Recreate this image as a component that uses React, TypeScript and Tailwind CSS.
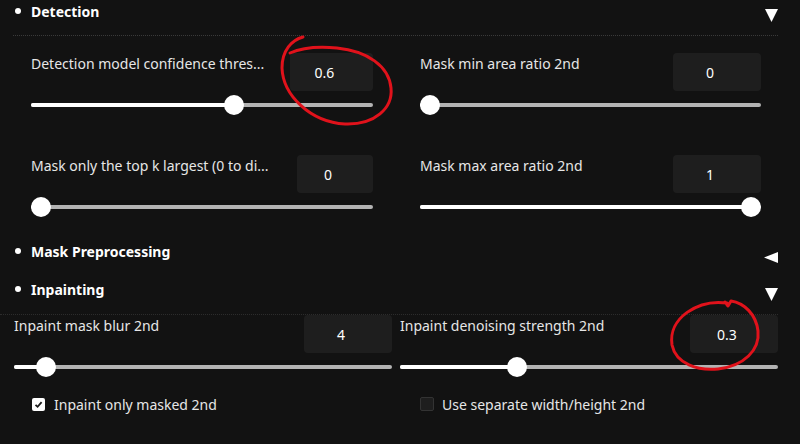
import React from 'react';

interface SliderProps {
  pct: number;
}

function Slider({ pct }: SliderProps) {
  return (
    <div className="relative h-5">
      <div className="absolute left-0 right-0 top-1/2 -translate-y-1/2 h-[4px] rounded-full bg-[#b3b3b3]" />
      <div
        className="absolute left-0 top-1/2 -translate-y-1/2 h-[4px] rounded-full bg-white"
        style={{ width: `calc(10px + ${pct} * (100% - 20px))` }}
      />
      <div
        className="absolute top-0 h-5 w-5 rounded-full bg-white"
        style={{ left: `calc(${pct} * (100% - 20px))` }}
      />
    </div>
  );
}

interface FieldProps {
  label: string;
  value: string;
  pct: number;
  boxClass: string;
}

function Field({ label, value, pct, boxClass }: FieldProps) {
  return (
    <div className="flex flex-col">
      <div className="flex items-start gap-2">
        <div className="flex-1 min-w-0 whitespace-nowrap overflow-hidden pt-[1px] text-[14px] leading-[20px] text-[#e6e6e6]">
          {label}
        </div>
        <div
          className={`${boxClass} h-[38px] shrink-0 rounded-[4px] bg-[#1e1e1e] flex items-center justify-center pr-[14px] text-[14px] text-white`}
        >
          {value}
        </div>
      </div>
      <div className="mt-1">
        <Slider pct={pct} />
      </div>
    </div>
  );
}

function TriDown({ className }: { className: string }) {
  return (
    <svg width="13" height="13" viewBox="0 0 13 13" className={className}>
      <polygon points="0,0 13,0 6.5,13" fill="white" />
    </svg>
  );
}

function TriLeft({ className }: { className: string }) {
  return (
    <svg width="14" height="11" viewBox="0 0 14 11" className={className}>
      <polygon points="14,0 14,11 0,5.5" fill="white" />
    </svg>
  );
}

function Header({ title, children }: { title: string; children: React.ReactNode }) {
  return (
    <div className="flex h-6 items-center justify-between pl-[15px] pr-[22px]">
      <div className="flex items-center gap-[10px] -translate-y-[1px]">
        <div className="h-[6px] w-[6px] rounded-full bg-white" />
        <span className="text-[14px] font-bold text-white">{title}</span>
      </div>
      {children}
    </div>
  );
}

export default function App() {
  return (
    <div className="relative h-[444px] w-[800px] overflow-hidden bg-[#121212] font-['Noto_Sans',sans-serif] text-white">
      <Header title="Detection">
        <TriDown className="mt-[7px]" />
      </Header>
      <div className="ml-[13px] mt-[11px] w-[765px] border-t border-dotted border-[#3a3a3a]" />

      <div className="grid grid-cols-[342px_341px] gap-x-[47px] gap-y-[40px] pl-[31px] pt-[17px]">
        <Field label="Detection model confidence thres..." value="0.6" pct={0.6} boxClass="w-[83px]" />
        <Field label="Mask min area ratio 2nd" value="0" pct={0} boxClass="w-[88px]" />
        <Field label="Mask only the top k largest (0 to di..." value="0" pct={0} boxClass="w-[76px]" />
        <Field label="Mask max area ratio 2nd" value="1" pct={1} boxClass="w-[88px]" />
      </div>

      <div className="mt-[23px]">
        <Header title="Mask Preprocessing">
          <TriLeft className="mt-[11px]" />
        </Header>
      </div>
      <div className="mt-[14px]">
        <Header title="Inpainting">
          <TriDown className="mt-[8px]" />
        </Header>
      </div>
      <div className="mt-[12px] w-[778px] border-t border-dotted border-[#2c2c2c]" />

      <div className="grid grid-cols-[378px_378px] gap-x-[8px] px-[14px]">
        <Field label="Inpaint mask blur 2nd" value="4" pct={4 / 64} boxClass="w-[88px]" />
        <Field label="Inpaint denoising strength 2nd" value="0.3" pct={0.3} boxClass="w-[88px]" />
        <div className="mt-[17px] flex h-5 items-center gap-[9px] pl-[18px]">
          <div className="flex h-[13px] w-[13px] items-center justify-center rounded-[2px] bg-white">
            <svg width="9" height="9" viewBox="0 0 9 9">
              <polyline points="1.5,4.8 3.6,6.8 7.6,2.2" fill="none" stroke="#1a1a1a" strokeWidth="1.8" />
            </svg>
          </div>
          <span className="text-[14px] text-[#e6e6e6]">Inpaint only masked 2nd</span>
        </div>
        <div className="mt-[17px] flex h-5 items-center gap-[8px] pl-[20px]">
          <div className="h-[14px] w-[14px] rounded-[2px] border border-[#333] bg-[#1e1e1e]" />
          <span className="text-[14px] text-[#e6e6e6]">Use separate width/height 2nd</span>
        </div>
      </div>

      <svg className="pointer-events-none absolute left-0 top-0" width="800" height="444" viewBox="0 0 800 444">
        <path
          d="M 303 37 C 292 40, 282 50, 282 68 C 283 95, 310 122, 345 124 C 375 125, 393 108, 391 88 C 389 66, 367 51, 337 48 C 316 46, 299 49, 290 53"
          fill="none"
          stroke="#e0121b"
          strokeWidth="3"
          strokeLinecap="round"
        />
        <path
          d="M 727 303 C 698 299, 668 318, 672 345 C 676 364, 698 371, 718 369 C 744 366, 760 350, 758 331 C 756 314, 744 303, 731 301 L 728 306 L 725 302"
          fill="none"
          stroke="#e0121b"
          strokeWidth="3"
          strokeLinecap="round"
          strokeLinejoin="round"
        />
      </svg>
    </div>
  );
}
